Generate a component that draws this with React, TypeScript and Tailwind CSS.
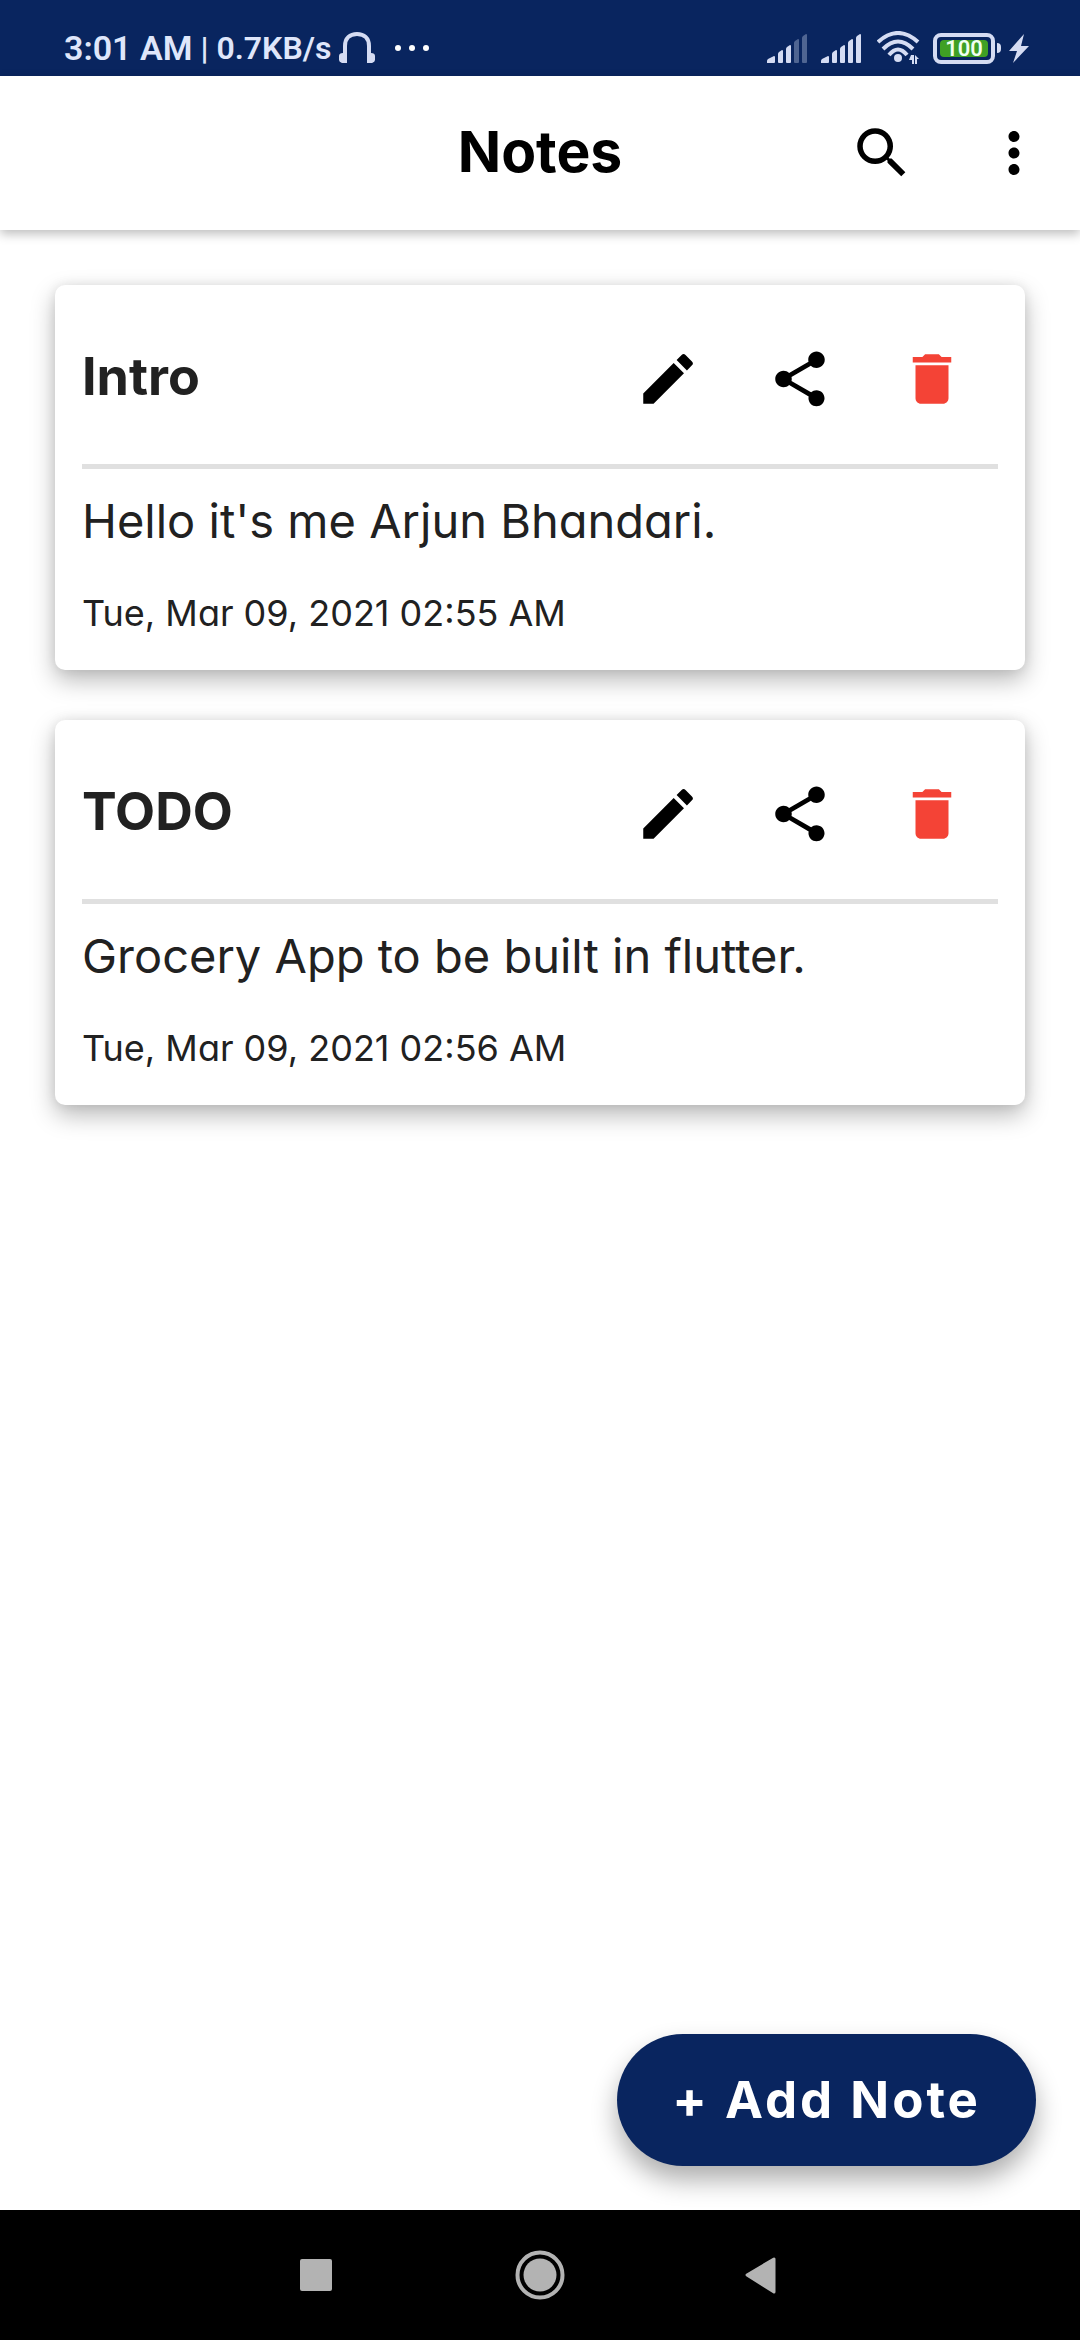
import type { ReactNode } from 'react';
import { MdDelete, MdEdit, MdMoreVert, MdSearch, MdShare } from 'react-icons/md';

type Note = { title: string; body: string; date: string };

const notes: Note[] = [
  { title: 'Intro', body: "Hello it's me Arjun Bhandari.", date: 'Tue, Mar 09, 2021 02:55 AM' },
  { title: 'TODO', body: 'Grocery App to be built in flutter.', date: 'Tue, Mar 09, 2021 02:56 AM' },
];

function IconButton({ label, children }: { label: string; children: ReactNode }) {
  return (
    <button type="button" aria-label={label} className="grid size-[132px] shrink-0 place-items-center rounded-full">
      {children}
    </button>
  );
}

function Signal({ level }: { level: number }) {
  const bars = [
    'M0 29V27Q0 26 1 25L7 22Q8 22 8 23V28Q8 29 7 29Z',
    'M11 28V20Q11 19 12 18L15 16Q16 16 16 17V28Q16 29 15 29H12Q11 29 11 28Z',
    'M19 28V15Q19 14 20 13L23 11Q24 11 24 12V28Q24 29 23 29H20Q19 29 19 28Z',
    'M27 28V9Q27 8 28 7L31 5Q32 5 32 6V28Q32 29 31 29H28Q27 29 27 28Z',
    'M35 28V4Q35 3 36 2L39 0Q40 0 40 1V28Q40 29 39 29H36Q35 29 35 28Z',
  ];
  return (
    <svg viewBox="0 0 40 29" className="h-[29px] w-10" aria-hidden="true">
      {bars.map((d, i) => (
        <path key={d} d={d} fill="#d5dcf3" opacity={i < level ? 1 : 0.35} />
      ))}
    </svg>
  );
}

function StatusBar() {
  return (
    <div className="flex h-[76px] shrink-0 items-end justify-between bg-[#09255f] pr-[51px] pb-2 pl-16 font-['Roboto',sans-serif] font-semibold text-[#dfe6fa]">
      <div className="flex h-10 items-center">
        <span className="text-[34px] leading-10">3:01 AM</span>
        <span className="mx-2 text-[32px] leading-10">|</span>
        <span className="text-[32px] leading-10">0.7KB/s</span>
        <svg viewBox="0 0 36 32" className="ml-2 h-8 w-9" aria-hidden="true">
          <path d="M6 24V14C6 6 11 2 18 2S30 6 30 14V24" fill="none" stroke="#d5dcf3" strokeWidth="4" />
          <path d="M8 31H3Q0 30 0 28V24Q0 21 4 21H8ZM28 31H33Q36 30 36 28V24Q36 21 32 21H28Z" fill="#d5dcf3" />
        </svg>
        <svg viewBox="0 0 34 6" className="ml-5 h-[6px] w-[34px]" aria-hidden="true" fill="#ffffff">
          <circle cx="3" cy="3" r="3" />
          <circle cx="17" cy="3" r="3" />
          <circle cx="31" cy="3" r="3" />
        </svg>
      </div>
      <div className="flex h-10 items-center">
        <Signal level={3} />
        <span className="w-[14px]" />
        <Signal level={5} />
        <svg viewBox="0 0 44 34" className="ml-4 h-[34px] w-11" aria-hidden="true">
          <g fill="none" stroke="#d5dcf3" strokeWidth="4">
            <path d="M1 11Q21 -7 41 11" />
            <path d="M6 18Q21 3 36 18" />
            <path d="M12 24Q21 13 30 24" />
          </g>
          <circle cx="21" cy="27" r="4" fill="#d5dcf3" />
          <path d="M34 24H37V33H35V29H32ZM38 33V24L42 28H40V33Z" fill="#d5dcf3" />
        </svg>
        <div className="relative ml-3 h-[31px] w-[62px] rounded-lg border-4 border-[#d5dcf3] p-[3px]">
          <div className="h-[17px] rounded-sm bg-[#3fa024]" />
          <span className="absolute inset-0 text-center text-[22px] leading-[23px] text-[#f0fff0]">100</span>
        </div>
        <span className="ml-[2px] h-[10px] w-1 rounded-r-sm bg-[#d5dcf3]" />
        <svg viewBox="0 0 20 29" className="ml-2 h-[29px] w-5" aria-hidden="true">
          <path d="M15 0L0 17H8L4 29L20 12H12Z" fill="#d5dcf3" />
        </svg>
      </div>
    </div>
  );
}

function NoteCard({ note }: { note: Note }) {
  return (
    <article className="rounded-[10px] bg-white px-[27px] pt-7 pb-[30px] text-[#212121] shadow-[0_10px_24px_rgba(0,0,0,0.28),0_0_12px_rgba(0,0,0,0.08)]">
      <div className="flex items-center justify-between">
        <h2 className="pb-1 text-[52px] leading-[66px] font-bold">{note.title}</h2>
        <div className="flex text-black">
          <IconButton label="Edit note">
            <MdEdit className="size-[66px]" />
          </IconButton>
          <IconButton label="Share note">
            <MdShare className="size-[66px]" />
          </IconButton>
          <IconButton label="Delete note">
            <MdDelete className="size-[66px] text-[#f44336]" />
          </IconButton>
        </div>
      </div>
      <hr className="mt-[19px] mb-[17px] border-0 border-t-[5px] border-[#e0e0e0]" />
      <p className="text-[47px] leading-[70px]">{note.body}</p>
      <p className="mt-[30px] text-[36px] leading-[54px]">{note.date}</p>
    </article>
  );
}

function NavBar() {
  return (
    <nav aria-label="System" className="flex h-[130px] shrink-0 justify-center bg-black text-[#b3b3b3]">
      <button type="button" aria-label="Recent apps" className="grid w-[222px] place-items-center">
        <svg viewBox="0 0 50 50" className="size-[50px]" fill="currentColor">
          <rect x="7" y="9" width="32" height="32" rx="2" />
        </svg>
      </button>
      <button type="button" aria-label="Home" className="grid w-[222px] place-items-center">
        <svg viewBox="0 0 50 50" className="size-[50px]" fill="currentColor">
          <circle cx="25" cy="25" r="22.5" fill="none" stroke="currentColor" strokeWidth="4" />
          <circle cx="25" cy="25" r="16.5" />
        </svg>
      </button>
      <button type="button" aria-label="Back" className="grid w-[222px] place-items-center">
        <svg viewBox="0 0 50 50" className="size-[50px]" fill="currentColor" stroke="currentColor" strokeWidth="3" strokeLinejoin="round">
          <path d="M10 25L37 9V42Z" />
        </svg>
      </button>
    </nav>
  );
}

export default function App() {
  return (
    <div className="flex min-h-screen flex-col bg-white font-['Inter',sans-serif] [font-feature-settings:'cv11']">
      <StatusBar />
      <header className="z-10 grid h-[154px] shrink-0 grid-cols-[1fr_auto_1fr] items-center bg-white text-black shadow-[0_4px_10px_rgba(0,0,0,0.26)]">
        <h1 className="col-start-2 pb-[2px] text-[57px] leading-[72px] font-bold">Notes</h1>
        <div className="flex justify-end">
          <IconButton label="Search">
            <MdSearch className="size-[66px]" />
          </IconButton>
          <IconButton label="More options">
            <MdMoreVert className="size-[66px]" />
          </IconButton>
        </div>
      </header>
      <main className="relative flex flex-1 flex-col gap-[50px] px-[55px] pt-[55px] pb-[220px]">
        {notes.map((note) => (
          <NoteCard key={note.title} note={note} />
        ))}
        <button
          type="button"
          className="absolute right-11 bottom-11 h-[132px] rounded-full bg-[#09255f] px-[55px] text-[51px] font-bold tracking-[3px] text-white shadow-[0_14px_26px_rgba(0,0,0,0.32)]"
        >
          + Add Note
        </button>
      </main>
      <NavBar />
    </div>
  );
}
